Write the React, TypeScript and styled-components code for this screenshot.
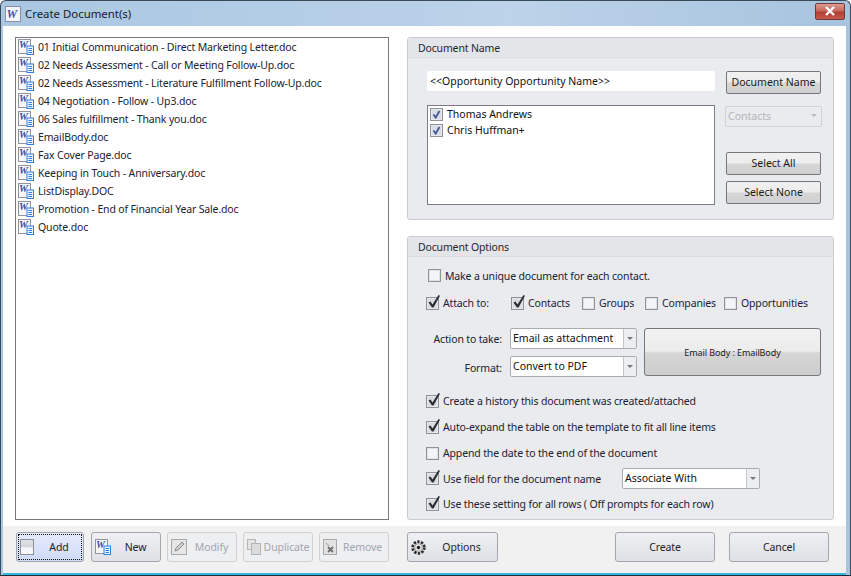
import React from "react";
import styled, { createGlobalStyle } from "styled-components";

const FONT_STACK = `"Noto Sans", "Liberation Sans", sans-serif`;

const GlobalStyle = createGlobalStyle`
  html, body { margin: 0; padding: 0; background: #fff; }
  body { font-family: ${FONT_STACK}; font-size: 10.5px; letter-spacing: -0.15px; color: #1c2230; }
  * { box-sizing: border-box; }
`;

const documents = [
  "01 Initial Communication - Direct Marketing Letter.doc",
  "02 Needs Assessment - Call or Meeting Follow-Up.doc",
  "02 Needs Assessment - Literature Fulfillment Follow-Up.doc",
  "04 Negotiation - Follow - Up3.doc",
  "06 Sales fulfillment - Thank you.doc",
  "EmailBody.doc",
  "Fax Cover Page.doc",
  "Keeping in Touch - Anniversary.doc",
  "ListDisplay.DOC",
  "Promotion - End of Financial Year Sale.doc",
  "Quote.doc",
];

const WordGlyph = () => (
  <svg width="16" height="16" viewBox="0 0 16 16">
    <rect x="0.5" y="0.5" width="12" height="14" fill="#f7f7fa" stroke="#8f93a0" />
    <text x="1" y="8.5" fontFamily="Liberation Serif, serif" fontSize="10" fontWeight="700" fontStyle="italic" letterSpacing="0" fill="#3f4a96">W</text>
    <rect x="9" y="7" width="6.5" height="8.5" fill="#eaf3ff" stroke="#2f7fe0" />
    <path d="M10.5 9.5h3.5M10.5 11.5h3.5M10.5 13.5h3.5" stroke="#2f7fe0" />
  </svg>
);

const TitleLogo = () => (
  <svg width="16" height="16" viewBox="0 0 16 16">
    <rect x="0.5" y="0.5" width="15" height="15" fill="#f3f4f8" stroke="#8b90a8" />
    <text x="1.5" y="12" fontFamily="Liberation Serif, serif" fontSize="12" fontWeight="700" fontStyle="italic" letterSpacing="0" fill="#4a55a8">W</text>
  </svg>
);

const BlankIcon = () => (
  <svg width="14" height="16" viewBox="0 0 14 16">
    <defs>
      <linearGradient id="blank" x1="0" y1="0" x2="0" y2="1">
        <stop offset="0" stopColor="#dfe1e4" />
        <stop offset="0.5" stopColor="#d4d6da" />
        <stop offset="0.55" stopColor="#f3f4f7" />
        <stop offset="1" stopColor="#fafafa" />
      </linearGradient>
    </defs>
    <rect x="0.5" y="0.5" width="13" height="15" fill="url(#blank)" stroke="#8c9099" />
  </svg>
);

const PencilIcon = () => (
  <svg width="16" height="16" viewBox="0 0 16 16">
    <rect x="0.5" y="0.5" width="15" height="15" fill="#e6e6e6" stroke="#a9a9a9" />
    <path d="M4 12l1-3 6-6 2 2-6 6z" fill="#cfcfcf" stroke="#8d8d8d" />
  </svg>
);

const DuplicateIcon = () => (
  <svg width="14" height="16" viewBox="0 0 14 16">
    <rect x="0.5" y="0.5" width="8" height="10" fill="#e4e4e4" stroke="#b5b5b5" />
    <rect x="4.5" y="4.5" width="9" height="11" fill="#dcdcdc" stroke="#b5b5b5" />
  </svg>
);

const RemoveIcon = () => (
  <svg width="14" height="16" viewBox="0 0 14 16">
    <rect x="0.5" y="0.5" width="13" height="15" fill="#e2e2e2" stroke="#a9a9a9" />
    <path d="M5 8l5 5M10 8l-5 5" stroke="#6e6e6e" strokeWidth="1.8" />
    <path d="M3 4l3 3" stroke="#b8b8b8" strokeWidth="1.4" />
  </svg>
);

const GearIcon = () => (
  <svg width="15" height="15" viewBox="0 0 15 15">
    <circle cx="7.5" cy="7.5" r="5.9" fill="#cfcfcf" stroke="#2c2c2c" strokeWidth="2.6" strokeDasharray="2.3 1.4" />
    <circle cx="7.5" cy="7.5" r="3.9" fill="#e4e4e4" stroke="#8a8a8a" strokeWidth="0.8" />
    <circle cx="7.5" cy="7.5" r="1.7" fill="#1f1f1f" />
  </svg>
);

const Window = styled.div`
  width: 851px;
  height: 576px;
  display: flex;
  flex-direction: column;
  overflow: hidden;
  border-radius: 6px 6px 0 0;
  border: 1px solid #3a4a58;
  border-bottom-color: #1c2b33;
  background: linear-gradient(to right, #a9c6e2, #bcd3e9 60%, #a7c3de);
`;

const TitleBar = styled.div`
  height: 25px;
  flex: none;
  display: flex;
  align-items: center;
  padding: 0 5px 0 4px;
  gap: 4px;
`;

const TitleText = styled.span`
  font-size: 11.4px;
  letter-spacing: 0;
  color: #14202c;
  flex: 1;
`;

const CloseButton = styled.div`
  width: 30px;
  height: 17px;
  margin-top: -5px;
  display: flex;
  align-items: center;
  justify-content: center;
  border: 1px solid #6d3a3e;
  border-radius: 2px;
  background: linear-gradient(to bottom, #dd9b90, #c76a5e 45%, #b04034 55%, #c9584a);
  color: #fff;
`;

const Client = styled.div`
  flex: 1;
  min-height: 0;
  margin: 0 4px 0 2px;
  display: flex;
  flex-direction: column;
  background: #fff;
  border-bottom: 2px solid #34b6de;
`;

const Body = styled.div`
  flex: 1;
  min-height: 0;
  padding: 11px 12px 6px 12px;
  display: flex;
  gap: 18px;
`;

const FileList = styled.div`
  width: 374px;
  border: 1px solid #77797c;
  padding: 0 0 0 2px;
  background: #fff;
`;

const FileRow = styled.div`
  height: 18px;
  display: flex;
  align-items: center;
  gap: 4px;
  white-space: nowrap;
`;

const RightColumn = styled.div`
  width: 427px;
  display: flex;
  flex-direction: column;
  gap: 16px;
`;

const Panel = styled.section<{ $height: number }>`
  height: ${({ $height }) => $height}px;
  border: 1px solid #c9ccd1;
  border-radius: 3px;
  background: #e9ebef;
  display: flex;
  flex-direction: column;
`;

const PanelTitle = styled.div`
  height: 20px;
  flex: none;
  padding-left: 10px;
  display: flex;
  align-items: center;
  background: #e3e5e8;
  border-bottom: 1px solid #dcdee2;
  color: #1d2736;
`;

const NameGrid = styled.div`
  padding: 13px 12px 0 19px;
  display: grid;
  grid-template-columns: 288px 96px;
  column-gap: 11px;
  row-gap: 11px;
`;

const NameInput = styled.div`
  height: 20px;
  padding-left: 3px;
  display: flex;
  align-items: center;
  background: #fff;
  border-radius: 2px;
  color: #111;
  letter-spacing: 0;
`;

const SideStack = styled.div`
  display: flex;
  flex-direction: column;
`;

const ContactList = styled.div`
  height: 100px;
  border: 1px solid #7b7f85;
  background: #fff;
  padding: 0 2px;
`;

const ContactRow = styled.label`
  height: 16px;
  display: flex;
  align-items: center;
  gap: 4px;
  color: #111;
  letter-spacing: 0;
`;

const GlossyButton = styled.button<{ $mt?: number }>`
  width: 95px;
  height: 23px;
  margin-top: ${({ $mt }) => $mt ?? 0}px;
  padding: 0 0 2px;
  border: 1px solid #74777b;
  border-radius: 2px;
  background: linear-gradient(to bottom, #f1f1f1 0, #ececec 48%, #d6d6d6 52%, #d0d0d0 100%);
  font: 10.5px ${FONT_STACK};
  letter-spacing: 0;
  color: #1b1b1b;
`;

const DisabledSelect = styled.div`
  width: 97px;
  height: 21px;
  margin: 1px 0 0 -1px;
  padding: 0 4px 2px 2px;
  display: flex;
  align-items: center;
  justify-content: space-between;
  border: 1px solid #d0d2d6;
  border-radius: 2px;
  color: #b3b5b8;
  letter-spacing: 0;
`;

const Caret = styled.span<{ $muted?: boolean }>`
  width: 0;
  height: 0;
  border-left: 3px solid transparent;
  border-right: 3px solid transparent;
  border-top: 3px solid ${({ $muted }) => ($muted ? "#bbb" : "#777")};
`;

const OptionsBody = styled.div`
  flex: 1;
  padding: 0 12px 0 18px;
  display: flex;
  flex-direction: column;
`;

const OptionRow = styled.div<{ $height: number; $indent?: number }>`
  height: ${({ $height }) => $height}px;
  padding-left: ${({ $indent }) => $indent ?? 0}px;
  display: flex;
  align-items: center;
  white-space: nowrap;
`;

const CheckItem = styled.label<{ $width?: number }>`
  ${({ $width }) => ($width ? `width: ${$width}px;` : "")}
  display: flex;
  align-items: center;
  gap: 4px;
  color: #1c2230;
`;

const Box = styled.span<{ $ticked?: boolean }>`
  position: relative;
  flex: none;
  width: 13px;
  height: 13px;
  border: 1px solid #8f9297;
  background: ${({ $ticked }) => ($ticked ? "#d9dce2" : "#f4f5f7")};
  box-shadow: inset 0 0 0 1px ${({ $ticked }) => ($ticked ? "#e6e8ec" : "#dfe1e5")};
`;

const Tick = styled.svg`
  position: absolute;
  left: 0;
  bottom: 0;
`;

const Check = ({ on }: { on: boolean }) => (
  <Box $ticked={on}>
    {on && (
      <Tick width="14" height="14" viewBox="0 0 14 14">
        <path d="M1.5 7.5L3.5 6.5L5.5 9.5L11.5 0L13 0.8L6.5 12.5H5z" fill="#2a2d33" />
      </Tick>
    )}
  </Box>
);

const BlueCheck = () => (
  <Box $ticked>
    <Tick width="11" height="11" viewBox="0 0 11 11">
      <path d="M2.5 5.5l2.2 3L8.5 2" fill="none" stroke="#44569c" strokeWidth="1.8" />
    </Tick>
  </Box>
);

const ActionArea = styled.div`
  height: 50px;
  margin-top: 16px;
  margin-bottom: 10px;
  display: grid;
  grid-template-columns: 77px 127px 177px;
  grid-template-rows: 21px 21px;
  column-gap: 7px;
  row-gap: 7px;
`;

const FieldLabel = styled.div<{ $nudge?: number }>`
  display: flex;
  align-items: center;
  justify-content: flex-end;
  padding-right: 1px;
  padding-top: ${({ $nudge }) => $nudge ?? 0}px;
  color: #1c2230;
`;

const SelectBox = styled.div<{ $width?: number }>`
  ${({ $width }) => ($width ? `width: ${$width}px;` : "")}
  height: 21px;
  padding-left: 2px;
  display: flex;
  align-items: center;
  border: 1px solid #a8abb0;
  border-radius: 2px;
  background: #fff;
  color: #111;
  letter-spacing: 0;
`;

const SelectValue = styled.span`
  flex: 1;
  padding-bottom: 1px;
`;

const SelectArrow = styled.span`
  width: 13px;
  height: 100%;
  flex: none;
  display: flex;
  align-items: center;
  justify-content: center;
  border-left: 1px solid #c4c6ca;
  background: #eceef1;
`;

const EmailButton = styled.button`
  grid-column: 3;
  grid-row: 1 / span 2;
  height: 48px;
  padding: 0;
  border: 1px solid #74777b;
  border-radius: 3px;
  background: linear-gradient(to bottom, #f2f2f2 0, #ececec 48%, #d6d6d6 52%, #cdcdcd 100%);
  font: 9px ${FONT_STACK};
  letter-spacing: -0.1px;
  color: #1b1b1b;
`;

const Footer = styled.div`
  height: 47px;
  flex: none;
  padding: 6px 0 0 13px;
  display: flex;
  background: #f1f1f1;
`;

const ToolButton = styled.button<{ $width: number; $focused?: boolean; $mr?: number }>`
  width: ${({ $width }) => $width}px;
  height: 30px;
  margin-right: ${({ $mr }) => $mr ?? 0}px;
  padding: 0 0 0 3px;
  display: flex;
  align-items: center;
  border: 1px solid ${({ disabled }) => (disabled ? "#cfd1d4" : "#a3a6ab")};
  border-radius: 3px;
  background: ${({ $focused, disabled }) =>
    $focused
      ? "linear-gradient(to bottom, #e6ebfb, #cfdcf8)"
      : disabled
        ? "#eeeff1"
        : "linear-gradient(to bottom, #eff0f3, #dfe1e6)"};
  outline: ${({ $focused }) => ($focused ? "1px dotted #111" : "none")};
  outline-offset: -3px;
  font: 10.5px ${FONT_STACK};
  letter-spacing: -0.1px;
  color: ${({ disabled }) => (disabled ? "#a2a5b4" : "#1c2230")};
`;

const ToolLabel = styled.span<{ $pad?: number }>`
  flex: 1;
  text-align: center;
  padding-left: ${({ $pad }) => $pad ?? 0}px;
  white-space: nowrap;
`;

const ActionButton = styled.button<{ $mr: number }>`
  width: 100px;
  height: 30px;
  margin-right: ${({ $mr }) => $mr}px;
  padding: 0;
  border: 1px solid #a3a6ab;
  border-radius: 3px;
  background: linear-gradient(to bottom, #eff0f3, #dfe1e6);
  font: 10.5px ${FONT_STACK};
  letter-spacing: -0.1px;
  color: #1c2230;
`;

export default function App() {
  return (
    <>
      <GlobalStyle />
      <Window>
        <TitleBar>
          <TitleLogo />
          <TitleText>Create Document(s)</TitleText>
          <CloseButton>
            <svg width="12" height="10" viewBox="0 0 12 10">
              <path d="M2 1l8 8M10 1l-8 8" stroke="#fff" strokeWidth="2.4" />
            </svg>
          </CloseButton>
        </TitleBar>
        <Client>
          <Body>
            <FileList>
              {documents.map((name) => (
                <FileRow key={name}>
                  <WordGlyph />
                  {name}
                </FileRow>
              ))}
            </FileList>
            <RightColumn>
              <Panel $height={183}>
                <PanelTitle>Document Name</PanelTitle>
                <NameGrid>
                  <NameInput>{"<<Opportunity Opportunity Name>>"}</NameInput>
                  <GlossyButton>Document Name</GlossyButton>
                  <ContactList>
                    <ContactRow>
                      <BlueCheck />
                      Thomas Andrews
                    </ContactRow>
                    <ContactRow>
                      <BlueCheck />
                      Chris Huffman+
                    </ContactRow>
                  </ContactList>
                  <SideStack>
                    <DisabledSelect>
                      Contacts
                      <Caret $muted />
                    </DisabledSelect>
                    <GlossyButton $mt={25}>Select All</GlossyButton>
                    <GlossyButton $mt={6}>Select None</GlossyButton>
                  </SideStack>
                </NameGrid>
              </Panel>
              <Panel $height={284}>
                <PanelTitle>Document Options</PanelTitle>
                <OptionsBody>
                  <OptionRow $height={37} $indent={2}>
                    <CheckItem>
                      <Check on={false} />
                      Make a unique document for each contact.
                    </CheckItem>
                  </OptionRow>
                  <OptionRow $height={18}>
                    <CheckItem $width={85}>
                      <Check on />
                      Attach to:
                    </CheckItem>
                    <CheckItem $width={71}>
                      <Check on />
                      Contacts
                    </CheckItem>
                    <CheckItem $width={63}>
                      <Check on={false} />
                      Groups
                    </CheckItem>
                    <CheckItem $width={79}>
                      <Check on={false} />
                      Companies
                    </CheckItem>
                    <CheckItem>
                      <Check on={false} />
                      Opportunities
                    </CheckItem>
                  </OptionRow>
                  <ActionArea>
                    <FieldLabel>Action to take:</FieldLabel>
                    <SelectBox>
                      <SelectValue>Email as attachment</SelectValue>
                      <SelectArrow>
                        <Caret />
                      </SelectArrow>
                    </SelectBox>
                    <EmailButton>Email Body : EmailBody</EmailButton>
                    <FieldLabel $nudge={3}>Format:</FieldLabel>
                    <SelectBox>
                      <SelectValue>Convert to PDF</SelectValue>
                      <SelectArrow>
                        <Caret />
                      </SelectArrow>
                    </SelectBox>
                  </ActionArea>
                  <OptionRow $height={26}>
                    <CheckItem>
                      <Check on />
                      Create a history this document was created/attached
                    </CheckItem>
                  </OptionRow>
                  <OptionRow $height={26}>
                    <CheckItem>
                      <Check on />
                      Auto-expand the table on the template to fit all line items
                    </CheckItem>
                  </OptionRow>
                  <OptionRow $height={26}>
                    <CheckItem>
                      <Check on={false} />
                      Append the date to the end of the document
                    </CheckItem>
                  </OptionRow>
                  <OptionRow $height={25}>
                    <CheckItem $width={196}>
                      <Check on />
                      Use field for the document name
                    </CheckItem>
                    <SelectBox $width={138}>
                      <SelectValue>Associate With</SelectValue>
                      <SelectArrow>
                        <Caret />
                      </SelectArrow>
                    </SelectBox>
                  </OptionRow>
                  <OptionRow $height={26}>
                    <CheckItem>
                      <Check on />
                      Use these setting for all rows ( Off prompts for each row)
                    </CheckItem>
                  </OptionRow>
                </OptionsBody>
              </Panel>
            </RightColumn>
          </Body>
          <Footer>
            <ToolButton $width={68} $focused $mr={7}>
              <BlankIcon />
              <ToolLabel $pad={1}>Add</ToolLabel>
            </ToolButton>
            <ToolButton $width={70} $mr={6}>
              <WordGlyph />
              <ToolLabel>New</ToolLabel>
            </ToolButton>
            <ToolButton $width={70} disabled $mr={6}>
              <PencilIcon />
              <ToolLabel>Modify</ToolLabel>
            </ToolButton>
            <ToolButton $width={70} disabled $mr={6}>
              <DuplicateIcon />
              <ToolLabel>Duplicate</ToolLabel>
            </ToolButton>
            <ToolButton $width={70} disabled $mr={18}>
              <RemoveIcon />
              <ToolLabel>Remove</ToolLabel>
            </ToolButton>
            <ToolButton $width={91} $mr={117}>
              <GearIcon />
              <ToolLabel>Options</ToolLabel>
            </ToolButton>
            <ActionButton $mr={14}>Create</ActionButton>
            <ActionButton $mr={0}>Cancel</ActionButton>
          </Footer>
        </Client>
      </Window>
    </>
  );
}
